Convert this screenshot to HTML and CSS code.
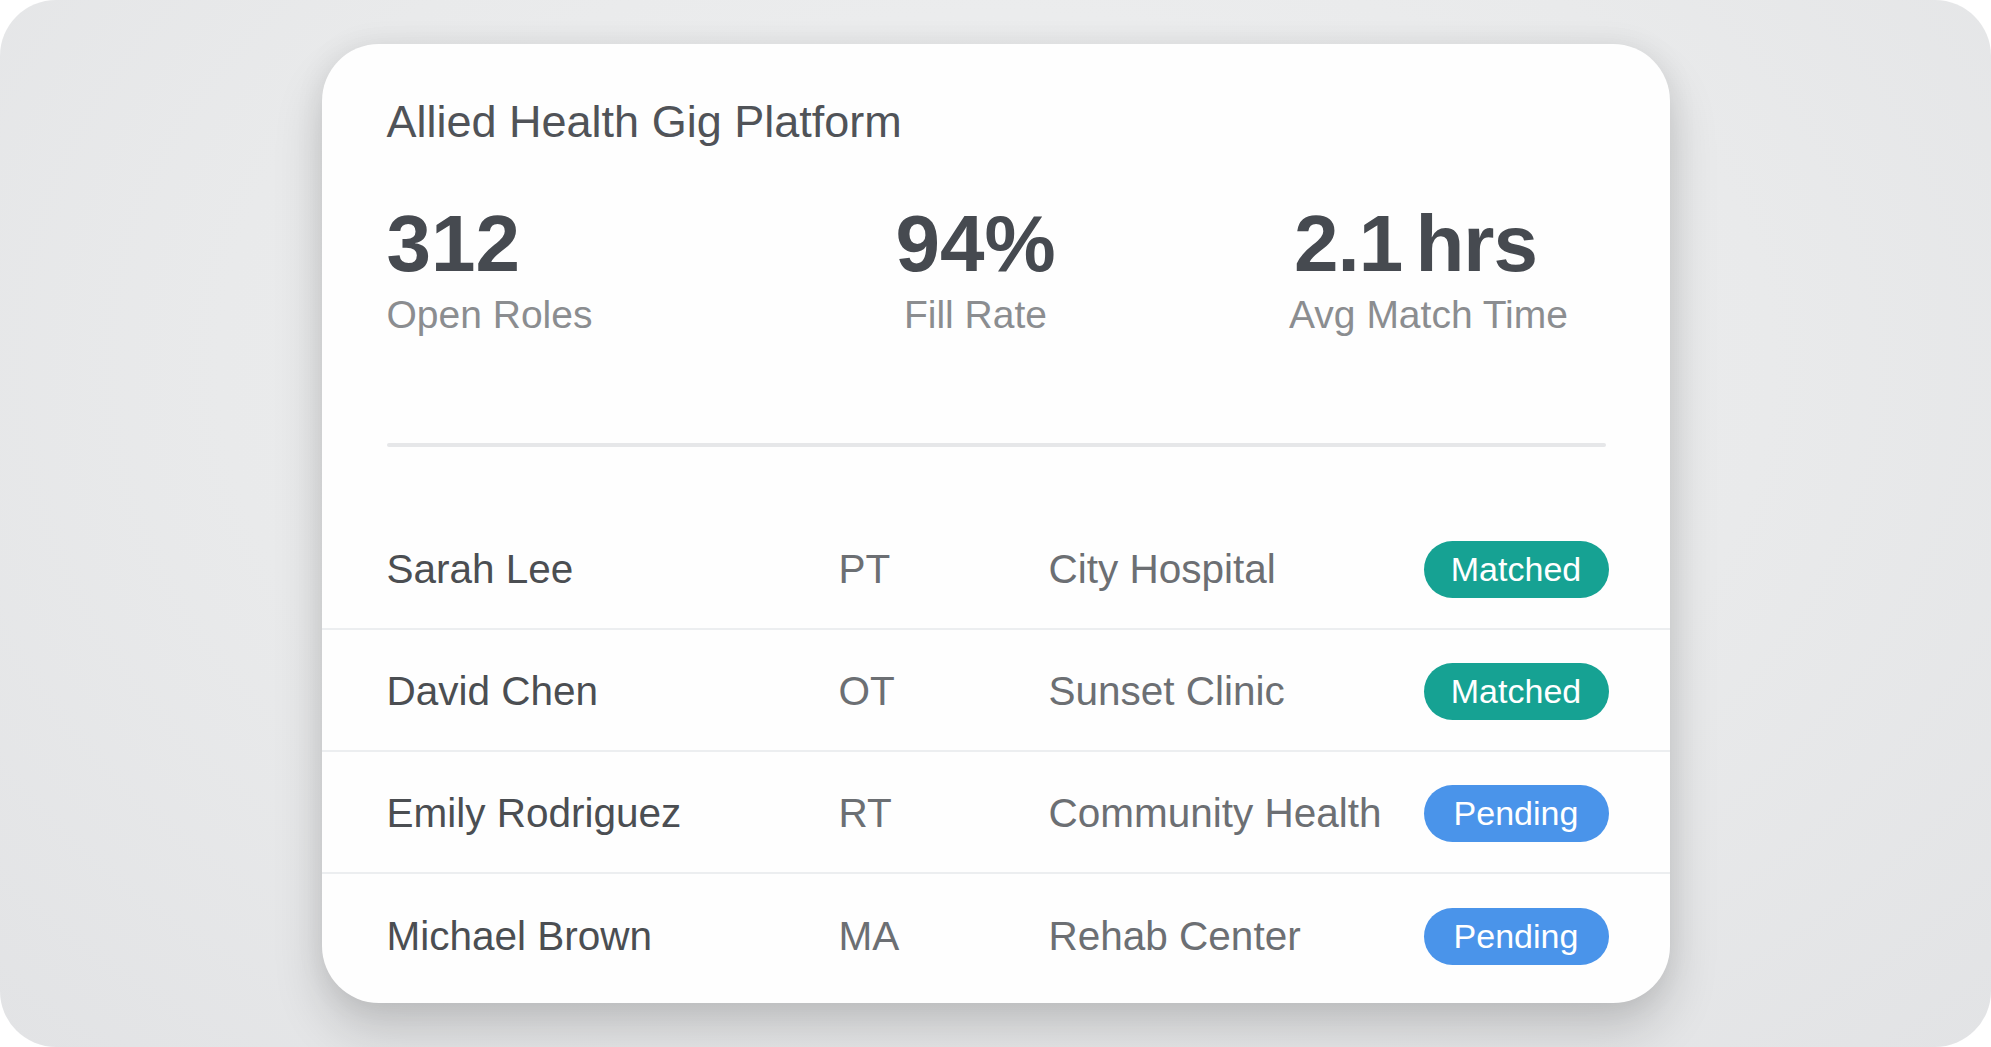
FILE: index.html
```html
<!DOCTYPE html>
<html>
<head>
  <title>Allied Health Gig Platform</title>
  <link rel="stylesheet" href="styles.css">
</head>
<body>

<div class="frame">
  <div class="card">

    <div class="head">
      <h1 class="title">Allied Health Gig Platform</h1>

      <div class="stats">
        <div class="stat">
          <div class="num">312</div>
          <div class="label">Open Roles</div>
        </div>
        <div class="stat mid">
          <div class="num">94%</div>
          <div class="label">Fill Rate</div>
        </div>
        <div class="stat mid">
          <div class="num tight">2.1 hrs</div>
          <div class="label">Avg Match Time</div>
        </div>
      </div>

      <div class="divider"></div>
    </div>

    <div class="list">
      <div class="row">
        <span class="name">Sarah Lee</span>
        <span class="role">PT</span>
        <span class="place">City Hospital</span>
        <span class="badge matched">Matched</span>
      </div>
      <div class="row">
        <span class="name">David Chen</span>
        <span class="role">OT</span>
        <span class="place">Sunset Clinic</span>
        <span class="badge matched">Matched</span>
      </div>
      <div class="row">
        <span class="name">Emily Rodriguez</span>
        <span class="role">RT</span>
        <span class="place">Community Health</span>
        <span class="badge pending">Pending</span>
      </div>
      <div class="row">
        <span class="name">Michael Brown</span>
        <span class="role">MA</span>
        <span class="place">Rehab Center</span>
        <span class="badge pending">Pending</span>
      </div>
    </div>

  </div>
</div>

</body>
</html>
```

FILE: styles.css
```css
* {
  box-sizing: border-box;
}

body {
  margin: 0;
  background: #fff;
  font-family: "Liberation Sans", Arial, sans-serif;
}

/* grey backdrop with rounded corners */
.frame {
  height: 100vh;
  border-radius: 56px;
  background: radial-gradient(ellipse at 50% 35%, #eff0f1 0%, #e9eaeb 55%, #e2e3e5 100%);
  display: flex;
  justify-content: center;
  padding-top: 44px;
  overflow: hidden;
}

.card {
  width: 1348px;
  height: 959px;
  background: #fefefe;
  border-radius: 57px;
  box-shadow: 0 28px 50px rgba(0, 0, 0, 0.16), 0 0 30px rgba(0, 0, 0, 0.07);
  overflow: hidden;
}

.head {
  padding: 51px 64px 0 65px;
}

.title {
  margin: 0;
  font-size: 45px;
  font-weight: normal;
  line-height: 1.2;
  color: #505358;
}

.stats {
  display: grid;
  grid-template-columns: 313px 552px 354px;
  margin-top: 55px;
}

.stat.mid {
  text-align: center;
}

.num {
  font-size: 80px;
  font-weight: bold;
  line-height: 1;
  color: #464a50;
}

.num.tight {
  letter-spacing: -1px;
  word-spacing: -8px;
  margin-right: 26px;
}

.label {
  margin-top: 8px;
  font-size: 39px;
  line-height: 1.2;
  color: #8b8d90;
}

.divider {
  height: 4px;
  margin-top: 104px;
  border-radius: 2px;
  background: #e6e7e9;
}

.list {
  margin-top: 61px;
}

.row {
  display: grid;
  grid-template-columns: 452px 210px 1fr 185px;
  align-items: center;
  height: 122px;
  padding: 4px 61px 0 65px;
  border-bottom: 2px solid #eceef0;
  font-size: 40.5px;
}

.row:last-child {
  border-bottom: none;
}

.name {
  color: #4b4e52;
}

.role,
.place {
  color: #6c6f73;
}

.badge {
  height: 57px;
  border-radius: 29px;
  color: #fff;
  font-size: 34px;
  line-height: 57px;
  text-align: center;
}

.badge.matched {
  background: #16a293;
}

.badge.pending {
  background: #4a94ea;
}
```
